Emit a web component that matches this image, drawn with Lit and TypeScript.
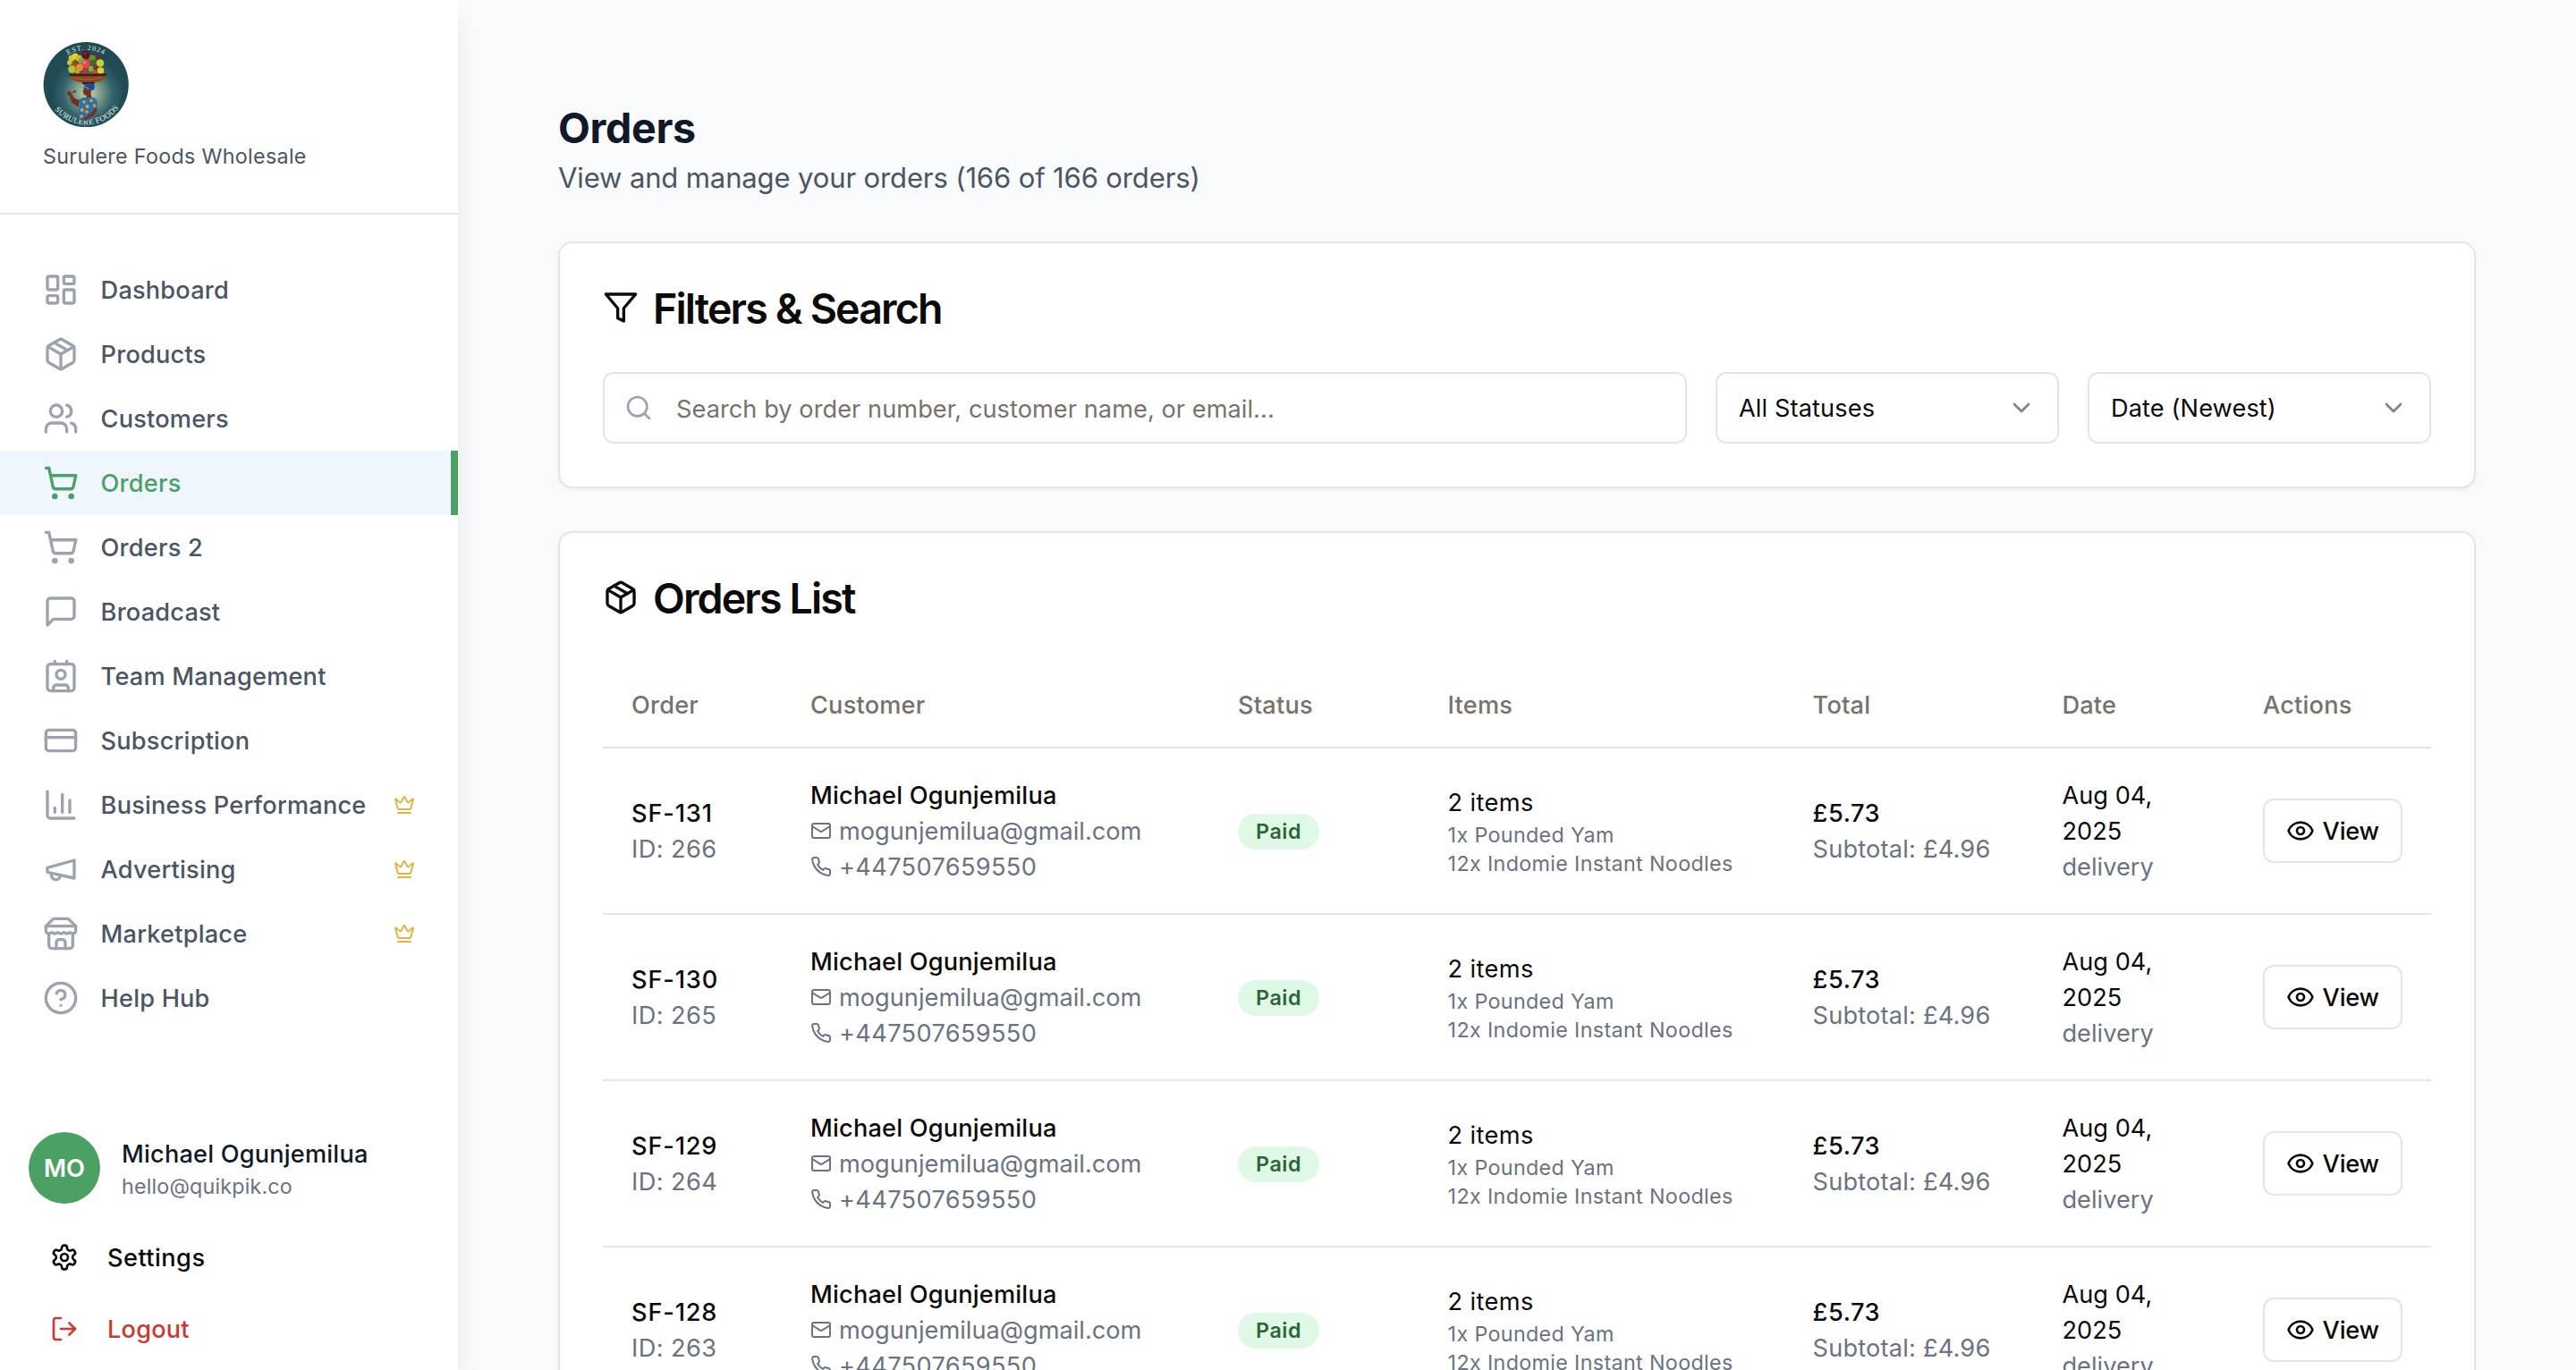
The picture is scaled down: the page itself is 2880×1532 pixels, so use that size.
import { LitElement, html, svg, css, nothing, type SVGTemplateResult } from "lit";
import { customElement, property } from "lit/decorators.js";
import { classMap } from "lit/directives/class-map.js";

const ICONS: Record<string, SVGTemplateResult> = {
  dashboard: svg`<rect width="7" height="9" x="3" y="3" rx="1"/><rect width="7" height="5" x="14" y="3" rx="1"/><rect width="7" height="9" x="14" y="12" rx="1"/><rect width="7" height="5" x="3" y="16" rx="1"/>`,
  package: svg`<path d="m7.5 4.27 9 5.15"/><path d="M21 8a2 2 0 0 0-1-1.73l-7-4a2 2 0 0 0-2 0l-7 4A2 2 0 0 0 3 8v8a2 2 0 0 0 1 1.73l7 4a2 2 0 0 0 2 0l7-4A2 2 0 0 0 21 16Z"/><path d="m3.3 7 8.7 5 8.7-5"/><path d="M12 22V12"/>`,
  users: svg`<path d="M16 21v-2a4 4 0 0 0-4-4H6a4 4 0 0 0-4 4v2"/><circle cx="9" cy="7" r="4"/><path d="M22 21v-2a4 4 0 0 0-3-3.87"/><path d="M16 3.13a4 4 0 0 1 0 7.75"/>`,
  cart: svg`<circle cx="8" cy="21" r="1"/><circle cx="19" cy="21" r="1"/><path d="M2.05 2.05h2l2.66 12.42a2 2 0 0 0 2 1.58h9.78a2 2 0 0 0 1.95-1.57l1.65-7.43H5.12"/>`,
  message: svg`<path d="M21 15a2 2 0 0 1-2 2H7l-4 4V5a2 2 0 0 1 2-2h14a2 2 0 0 1 2 2z"/>`,
  contact: svg`<path d="M16 2v2"/><path d="M7 22v-2a2 2 0 0 1 2-2h6a2 2 0 0 1 2 2v2"/><path d="M8 2v2"/><circle cx="12" cy="11" r="3"/><rect x="3" y="4" width="18" height="18" rx="2"/>`,
  card: svg`<rect width="20" height="14" x="2" y="5" rx="2"/><line x1="2" x2="22" y1="10" y2="10"/>`,
  chart: svg`<path d="M3 3v16a2 2 0 0 0 2 2h16"/><path d="M18 17V9"/><path d="M13 17V5"/><path d="M8 17v-3"/>`,
  megaphone: svg`<path d="m3 11 18-5v12L3 14v-3z"/><path d="M11.6 16.8a3 3 0 1 1-5.8-1.6"/>`,
  store: svg`<path d="m2 7 4.41-4.41A2 2 0 0 1 7.83 2h8.34a2 2 0 0 1 1.42.59L22 7"/><path d="M4 12v8a2 2 0 0 0 2 2h12a2 2 0 0 0 2-2v-8"/><path d="M15 22v-4a2 2 0 0 0-2-2h-2a2 2 0 0 0-2 2v4"/><path d="M2 7h20"/><path d="M22 7v3a2 2 0 0 1-2 2a2.7 2.7 0 0 1-1.59-.63.7.7 0 0 0-.82 0A2.7 2.7 0 0 1 16 12a2.7 2.7 0 0 1-1.59-.63.7.7 0 0 0-.82 0A2.7 2.7 0 0 1 12 12a2.7 2.7 0 0 1-1.59-.63.7.7 0 0 0-.82 0A2.7 2.7 0 0 1 8 12a2.7 2.7 0 0 1-1.59-.63.7.7 0 0 0-.82 0A2.7 2.7 0 0 1 4 12a2 2 0 0 1-2-2V7"/>`,
  help: svg`<circle cx="12" cy="12" r="10"/><path d="M9.09 9a3 3 0 0 1 5.83 1c0 2-3 3-3 3"/><path d="M12 17h.01"/>`,
  crown: svg`<path d="M11.562 3.266a.5.5 0 0 1 .876 0L15.39 8.87a1 1 0 0 0 1.516.294L21.183 5.5a.5.5 0 0 1 .798.519l-2.834 10.246a1 1 0 0 1-.956.734H5.81a1 1 0 0 1-.957-.734L2.02 6.02a.5.5 0 0 1 .798-.519l4.276 3.664a1 1 0 0 0 1.516-.294z"/><path d="M5 21h14"/>`,
  settings: svg`<path d="M12.22 2h-.44a2 2 0 0 0-2 2v.18a2 2 0 0 1-1 1.73l-.43.25a2 2 0 0 1-2 0l-.15-.08a2 2 0 0 0-2.73.73l-.22.38a2 2 0 0 0 .73 2.73l.15.1a2 2 0 0 1 1 1.72v.51a2 2 0 0 1-1 1.74l-.15.09a2 2 0 0 0-.73 2.73l.22.38a2 2 0 0 0 2.73.73l.15-.08a2 2 0 0 1 2 0l.43.25a2 2 0 0 1 1 1.73V20a2 2 0 0 0 2 2h.44a2 2 0 0 0 2-2v-.18a2 2 0 0 1 1-1.73l.43-.25a2 2 0 0 1 2 0l.15.08a2 2 0 0 0 2.73-.73l.22-.39a2 2 0 0 0-.73-2.73l-.15-.08a2 2 0 0 1-1-1.74v-.5a2 2 0 0 1 1-1.74l.15-.09a2 2 0 0 0 .73-2.73l-.22-.38a2 2 0 0 0-2.73-.73l-.15.08a2 2 0 0 1-2 0l-.43-.25a2 2 0 0 1-1-1.73V4a2 2 0 0 0-2-2z"/><circle cx="12" cy="12" r="3"/>`,
  logout: svg`<path d="M9 21H5a2 2 0 0 1-2-2V5a2 2 0 0 1 2-2h4"/><polyline points="16 17 21 12 16 7"/><line x1="21" x2="9" y1="12" y2="12"/>`,
  filter: svg`<polygon points="22 3 2 3 10 12.46 10 19 14 21 14 12.46 22 3"/>`,
  search: svg`<circle cx="11" cy="11" r="8"/><path d="m21 21-4.3-4.3"/>`,
  chevron: svg`<path d="m6 9 6 6 6-6"/>`,
  mail: svg`<rect width="20" height="16" x="2" y="4" rx="2"/><path d="m22 7-8.97 5.7a1.94 1.94 0 0 1-2.06 0L2 7"/>`,
  phone: svg`<path d="M22 16.92v3a2 2 0 0 1-2.18 2 19.79 19.79 0 0 1-8.63-3.07 19.5 19.5 0 0 1-6-6 19.79 19.79 0 0 1-3.07-8.67A2 2 0 0 1 4.11 2h3a2 2 0 0 1 2 1.72 12.84 12.84 0 0 0 .7 2.81 2 2 0 0 1-.45 2.11L8.09 9.91a16 16 0 0 0 6 6l1.27-1.27a2 2 0 0 1 2.11-.45 12.84 12.84 0 0 0 2.81.7A2 2 0 0 1 22 16.92z"/>`,
  eye: svg`<path d="M2.062 12.348a1 1 0 0 1 0-.696 10.75 10.75 0 0 1 19.876 0 1 1 0 0 1 0 .696 10.75 10.75 0 0 1-19.876 0"/><circle cx="12" cy="12" r="3"/>`,
};

@customElement("ui-icon")
class UiIcon extends LitElement {
  @property() name = "";
  static styles = css`
    :host { display: block; flex: none; width: 32px; height: 32px; }
    .glyph { display: block; width: 100%; height: 100%; }
  `;
  render() {
    return html`<svg class="glyph" viewBox="0 0 24 24" fill="none" stroke="currentColor" stroke-width="2" stroke-linecap="round" stroke-linejoin="round">${ICONS[this.name]}</svg>`;
  }
}

const FRUIT: [number, number, number, string][] = [
  [32, 19, 3.5, "#d8c52e"], [36, 17, 3.5, "#e8cf3c"], [40, 19, 3.5, "#cdbb2c"], [30, 24, 3, "#c9c437"],
  [55, 19, 3.6, "#6d8f2f"], [62, 18.5, 2.6, "#7d1f3c"], [43, 22, 3.6, "#8aa04a"], [48, 15.5, 4.5, "#5e1420"],
  [57, 24, 3.5, "#3f6a2c"], [64, 24.5, 4.3, "#c3d23a"], [35, 27, 3.6, "#a8442f"], [48, 25.5, 4.8, "#dc4a52"],
  [41, 29.5, 4, "#ef8b35"], [32.5, 31.5, 4.3, "#a9c83c"], [54, 31, 3.2, "#7fb13f"], [59, 29.5, 3, "#8c2a4c"],
  [64.5, 33, 3.8, "#d9d136"], [47.5, 33.5, 3, "#ba3450"], [38.5, 34.5, 2.4, "#d99a34"], [58, 34.5, 2.4, "#c4532f"],
];

@customElement("brand-logo")
class BrandLogo extends LitElement {
  static styles = css`
    :host { display: block; width: 96px; height: 96px; }
    .art { display: block; width: 96px; height: 96px; overflow: hidden; }
    .ring { font-family: "Liberation Serif", serif; fill: #e4efea; }
    .top { font-size: 8px; letter-spacing: 1px; }
    .bottom { font-size: 9px; letter-spacing: 0.35px; }
  `;
  render() {
    return html`<svg class="art" viewBox="0 0 96 96">
      <defs>
        <radialGradient id="glow" cx="0.52" cy="0.6" r="0.42">
          <stop offset="0" stop-color="#cfd8b0"/><stop offset="0.35" stop-color="#7f9d8b"/>
          <stop offset="0.7" stop-color="#33626a"/><stop offset="1" stop-color="#204b55"/>
        </radialGradient>
        <path id="arc-top" d="M9.200 48.700a39 39 0 0 1 78 0"/>
        <path id="arc-bottom" d="M3.5 48.7a44.7 44.7 0 0 0 89.4 0"/>
      </defs>
      <circle cx="48.2" cy="48.7" r="47.6" fill="url(#glow)"/>
      <text class="ring top" text-anchor="middle"><textPath href="#arc-top" startOffset="50%">EST. 2024</textPath></text>
      <text class="ring bottom" text-anchor="middle"><textPath href="#arc-bottom" startOffset="51%">SURULERE FOODS</textPath></text>
      <path d="M29 35V20q5-6 10-4l9-2 12 3q8 3 8 18z" fill="#5a5a26"/>
      ${FRUIT.map(([x, y, r, c]) => svg`<circle cx=${x} cy=${y} r=${r} fill=${c}/>`)}
      <circle cx="46.6" cy="24" r="1.6" fill="#f08a86"/>
      <circle cx="46.8" cy="14" r="1.1" fill="#a04450"/>
      <path d="M29 36.5h42.5q-2 8-12 9.6H41q-10-1.8-12-9.6z" fill="#8a4522"/>
      <path d="M29 36.5h42.5l-1.2 2.4H30.2z" fill="#40200f"/>
      <path d="M34 41q15 4 32-.4" fill="none" stroke="#b56a38" stroke-width="1"/>
      <path d="M43 46h15l-1 2.2H45z" fill="#301b14"/>
      <path d="M46 48q5-2 11 0 2 3-.5 6.8-4 1-7.5-3.3-3-.5-3-3.5z" fill="#20499a"/>
      <path d="M45.6 51q2.500 0 4.500 2.500l4 1-.5 5.500 1.500 3.500h-6.500v-3q-3.600.6-3.200-2.800l-1-1.300 1-1.600z" fill="#6e3522"/>
      <path d="M41 66l-1.500 8-7-5-3-8-2-1-.5-3 3-1.500 2 3.500 3.300 5z" fill="#6e301f"/>
      <path d="M29 60l5-3" stroke="#7a3622" stroke-width="1"/><ellipse cx="35.500" cy="56.400" rx="1.800" ry="1.200" fill="#7a3622"/>
      <path d="M40.500 65.500q4-3.500 9-2.500h6q5 .5 5.500 6l-.6 8q-.4 6-6.400 10.500l-6 1.500-8-1.500.5-12z" fill="#2e70a8"/>
      <path d="M60.800 75q.4 5-5 8.500l-7.500 5-4.500-.5 5-4 7-5.500 1-3z" fill="#74341f"/>
      <circle cx="46" cy="68" r="1.800" fill="#e0a53a"/><circle cx="54" cy="66.500" r="1.700" fill="#e0a53a"/>
      <circle cx="49.500" cy="73" r="2" fill="#e0a53a"/><circle cx="57.500" cy="72" r="1.700" fill="#e0a53a"/>
      <circle cx="43.800" cy="77" r="1.900" fill="#e0a53a"/><circle cx="49" cy="79" r="1.700" fill="#e0a53a"/>
      <circle cx="43" cy="84" r="1.700" fill="#e0a53a"/>
    </svg>`;
  }
}

interface NavItem { icon: string; label: string; active?: boolean; premium?: boolean; }

const NAV: NavItem[] = [
  { icon: "dashboard", label: "Dashboard" },
  { icon: "package", label: "Products" },
  { icon: "users", label: "Customers" },
  { icon: "cart", label: "Orders", active: true },
  { icon: "cart", label: "Orders 2" },
  { icon: "message", label: "Broadcast" },
  { icon: "contact", label: "Team Management" },
  { icon: "card", label: "Subscription" },
  { icon: "chart", label: "Business Performance", premium: true },
  { icon: "megaphone", label: "Advertising", premium: true },
  { icon: "store", label: "Marketplace", premium: true },
  { icon: "help", label: "Help Hub" },
];

@customElement("app-sidebar")
class AppSidebar extends LitElement {
  static styles = css`
    :host {
      display: flex; flex-direction: column; box-sizing: border-box; width: 512px; height: 100%;
      background: #fff; box-shadow: 0 20px 30px -6px rgba(0,0,0,.1), 0 8px 12px -8px rgba(0,0,0,.1);
      font-size: 27.16px; font-weight: 500; letter-spacing: 0.2px;
    }
    .brand { display: flex; flex-direction: column; gap: 16px; padding: 46px 48px 47px; border-bottom: 2px solid #e5e7eb; }
    .company { padding-top: 1px; font-size: 23.28px; font-weight: 400; line-height: 32px; letter-spacing: 0.32px; color: #4b5563; }
    .nav { display: flex; flex-direction: column; padding-top: 48px; }
    .item { display: flex; align-items: center; gap: 24px; height: 72px; padding: 0 48px; color: #4b5563; }
    .item ui-icon { width: 40px; height: 40px; color: #9ca3af; }
    .item .crown { width: 24px; height: 24px; color: #e3b341; }
    .label { flex: 1; padding: 1px 0 0 0.6px; white-space: nowrap; }
    .item.active { background: #eff6ff; border-right: 8px solid #4ba164; padding-right: 40px; color: #4ba164; }
    .item.active ui-icon { color: #4ba164; }
    .account { padding: 114px 32px 0; display: flex; flex-direction: column; }
    .user { display: flex; align-items: center; gap: 24px; margin-bottom: 20px; }
    .avatar { display: grid; place-items: center; width: 80px; height: 80px; border-radius: 50%; background: #4ba164; color: #fff; font-weight: 600; letter-spacing: 0; padding-top: 1px; box-sizing: border-box; }
    .name { line-height: 41px; color: #111827; }
    .email { font-size: 23.28px; font-weight: 400; line-height: 31px; letter-spacing: 0.18px; color: #6b7280; }
    .action { display: flex; align-items: center; gap: 32px; height: 80px; padding-left: 24px; color: #0c0a09; letter-spacing: 0.45px; }
    .action .text { padding-top: 1px; }
    .logout { color: #ca3a31; letter-spacing: 0.2px; }
  `;
  render() {
    return html`
      <header class="brand"><brand-logo></brand-logo><div class="company">Surulere Foods Wholesale</div></header>
      <nav class="nav">
        ${NAV.map((n) => html`<a class=${classMap({ item: true, active: !!n.active })}>
          <ui-icon name=${n.icon}></ui-icon><span class="label">${n.label}</span>
          ${n.premium ? html`<ui-icon class="crown" name="crown"></ui-icon>` : nothing}
        </a>`)}
      </nav>
      <section class="account">
        <div class="user">
          <div class="avatar">MO</div>
          <div><div class="name">Michael Ogunjemilua</div><div class="email">hello@quikpik.co</div></div>
        </div>
        <div class="action"><ui-icon name="settings"></ui-icon><span class="text">Settings</span></div>
        <div class="action logout"><ui-icon name="logout"></ui-icon><span class="text">Logout</span></div>
      </section>`;
  }
}

const ORDERS = [
  { no: "SF-131", id: 266 },
  { no: "SF-130", id: 265 },
  { no: "SF-129", id: 264 },
  { no: "SF-128", id: 263 },
];

@customElement("orders-table")
class OrdersTable extends LitElement {
  static styles = css`
    :host { display: block; font-size: 27.16px; line-height: 40px; letter-spacing: 0.2px; color: #0c0a09; }
    .row { display: grid; grid-template-columns: 200px 478px 234.6px 408px 278.8px 224.6px 220px; align-items: center; height: 184px; border-bottom: 2px solid #e5e5e5; }
    .head { height: 95px; font-weight: 500; color: #78716c; }
    .head > div { padding-top: 3px; }
    .row > div { padding-left: 32px; white-space: nowrap; }
    .body > div { padding-top: 1px; }
    .strong { font-weight: 500; }
    .muted { color: #6b7280; }
    .line { display: flex; align-items: center; gap: 8px; color: #6b7280; }
    .line ui-icon { width: 24px; height: 24px; margin-top: -1px; }
    .mail { letter-spacing: 0.02px; }
    .phone { letter-spacing: 0.36px; }
    .no { letter-spacing: 0.85px; }
    .id { letter-spacing: 0.42px; }
    .count { letter-spacing: 0.4px; }
    .product { font-size: 23.28px; line-height: 32px; letter-spacing: 0.36px; color: #6b7280; }
    .amount { letter-spacing: 0.56px; }
    .date { letter-spacing: 0.05px; }
    .badge { display: flex; align-items: center; width: fit-content; height: 40px; box-sizing: border-box; margin-top: 1px; padding: 0 20px; border-radius: 20px; background: #e0f9e7; color: #2d6537; font-size: 23.28px; font-weight: 600; line-height: 38px; letter-spacing: 0.6px; }
    .button { display: flex; align-items: center; gap: 8px; box-sizing: border-box; width: 156px; height: 72px; padding: 0 24px; margin-top: -1px; border: 2px solid #e5e5e5; border-radius: 12px; font-weight: 500; letter-spacing: -0.2px; }
    .button .text { padding: 1px 0 0 0.6px; }
  `;
  render() {
    return html`
      <div class="row head"><div>Order</div><div>Customer</div><div>Status</div><div>Items</div><div>Total</div><div>Date</div><div>Actions</div></div>
      ${ORDERS.map((o) => html`<div class="row body">
        <div><div class="strong no">${o.no}</div><div class="muted id">ID: ${o.id}</div></div>
        <div>
          <div class="strong">Michael Ogunjemilua</div>
          <div class="line mail"><ui-icon name="mail"></ui-icon><span>mogunjemilua@gmail.com</span></div>
          <div class="line phone"><ui-icon name="phone"></ui-icon><span>+447507659550</span></div>
        </div>
        <div><div class="badge">Paid</div></div>
        <div><div class="count">2 items</div><div class="product">1x Pounded Yam</div><div class="product">12x Indomie Instant Noodles</div></div>
        <div><div class="strong amount">£5.73</div><div class="muted">Subtotal: £4.96</div></div>
        <div class="date"><div>Aug 04,</div><div>2025</div><div class="muted">delivery</div></div>
        <div><div class="button"><ui-icon name="eye"></ui-icon><span class="text">View</span></div></div>
      </div>`)}`;
  }
}

@customElement("app-root")
class AppRoot extends LitElement {
  static styles = css`
    :host { display: block; height: 100vh; overflow: hidden; font-family: Inter, "Noto Sans", sans-serif; background: #f9fafb; }
    .layout { display: grid; grid-template-columns: 512px 1fr; height: 100%; }
    .main { padding: 110px 112px 0; min-width: 0; overflow: hidden; }
    app-sidebar { position: relative; z-index: 1; }
    .title { margin: 0; font-size: 46.56px; font-weight: 700; line-height: 66px; letter-spacing: -0.34px; color: #111827; }
    .subtitle { margin: 0 0 48px; font-size: 31.04px; line-height: 46px; letter-spacing: -0.14px; color: #4b5563; }
    .card { display: flex; flex-direction: column; gap: 48px; margin-bottom: 48px; padding: 48px; border: 2px solid #e7e5e4; border-radius: 16px; background: #fff; box-shadow: 0 2px 4px rgba(0,0,0,.05); color: #0c0a09; }
    .heading { display: flex; align-items: center; gap: 16px; height: 48px; margin: 0; font-size: 46.56px; font-weight: 600; line-height: 46px; letter-spacing: -1.86px; }
    .heading .text { padding-top: 2px; }
    .heading ui-icon { width: 40px; height: 40px; }
    .filters { display: grid; grid-template-columns: 1fr 384px 384px; gap: 32px; font-size: 27.16px; letter-spacing: 0.12px; }
    .field { display: flex; align-items: center; box-sizing: border-box; height: 80px; padding: 0 24px; border: 2px solid #e5e5e5; border-radius: 12px; }
    .field .text { padding-top: 1px; }
    .search { gap: 26px; padding-left: 22px; color: #78716c; letter-spacing: 0.06px; }
    .search .text { padding-top: 3px; }
    .search ui-icon { color: #9ca3af; }
    .select { justify-content: space-between; }
    .select ui-icon { opacity: 0.5; }
  `;
  render() {
    return html`<div class="layout">
      <app-sidebar></app-sidebar>
      <main class="main">
        <h1 class="title">Orders</h1>
        <p class="subtitle">View and manage your orders (166 of 166 orders)</p>
        <section class="card">
          <h2 class="heading"><ui-icon name="filter"></ui-icon><span class="text">Filters &amp; Search</span></h2>
          <div class="filters">
            <div class="field search"><ui-icon name="search"></ui-icon><span class="text">Search by order number, customer name, or email...</span></div>
            <div class="field select"><span class="text">All Statuses</span><ui-icon name="chevron"></ui-icon></div>
            <div class="field select"><span class="text">Date (Newest)</span><ui-icon name="chevron"></ui-icon></div>
          </div>
        </section>
        <section class="card">
          <h2 class="heading"><ui-icon name="package"></ui-icon><span class="text">Orders List</span></h2>
          <orders-table></orders-table>
        </section>
      </main>
    </div>`;
  }
}
